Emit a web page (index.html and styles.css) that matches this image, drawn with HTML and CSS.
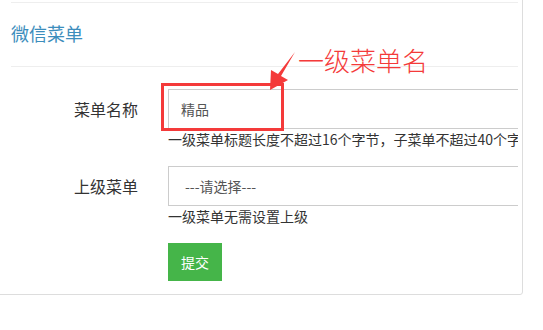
FILE: index.html
```html
<!DOCTYPE html>
<html lang="zh-CN">
<head>
    <meta charset="UTF-8">
    <meta name="viewport" content="width=device-width, initial-scale=1.0">
    <title>微信菜单</title>
    <link rel="stylesheet" href="styles.css">
</head>
<body>
    <div class="panel">
        <div class="panel-prev"></div>
        <h3 class="panel-title">微信菜单</h3>
        <form class="menu-form">
            <div class="form-row">
                <label class="form-label" for="name">菜单名称</label>
                <div class="form-field">
                    <input class="form-input" id="name" type="text" value="精品">
                    <p class="help">一级菜单标题长度不超过16个字节，子菜单不超过40个字节</p>
                </div>
            </div>
            <div class="form-row">
                <label class="form-label" for="parent">上级菜单</label>
                <div class="form-field">
                    <select class="form-input form-select" id="parent">
                        <option>---请选择---</option>
                    </select>
                    <p class="help">一级菜单无需设置上级</p>
                </div>
            </div>
            <div class="form-row form-actions">
                <span></span>
                <div class="form-field">
                    <button type="button" class="btn-submit">提交</button>
                </div>
            </div>
        </form>
    </div>

    <!-- 标注 -->
    <div class="mark-box"></div>
    <svg class="mark-arrow" width="543" height="330" viewBox="0 0 543 330">
        <polygon points="295,52 281,76 288,80 270,90 271,70 278,74" fill="#f43a3a"/>
    </svg>
    <div class="mark-text">一级菜单名</div>
</body>
</html>
```
FILE: styles.css
```css
body {
    margin: 0;
    font-family: "Noto Sans CJK SC", sans-serif;
    background-color: #fff;
    color: #333;
}
.panel {
    box-sizing: border-box;
    width: 543px;
    margin: -10px 0 0 -20px;
    border: 1px solid #ddd;
    border-radius: 3px;
    padding: 0 4px 13px 30px;
}
.panel-prev {
    height: 11px;
    border-bottom: 1px solid #eee;
}
.panel-title {
    margin: 0;
    padding: 18px 0 21px;
    font-size: 18px;
    line-height: 24px;
    font-weight: normal;
    color: #3c8dbc;
    border-bottom: 1px solid #eee;
}
.menu-form {
    padding-top: 22px;
}
.form-row {
    display: grid;
    grid-template-columns: 127px 1fr;
    column-gap: 30px;
    margin-bottom: 17px;
}
.form-row:last-child {
    margin-bottom: 0;
}
.form-label {
    text-align: right;
    font-size: 16px;
    line-height: 40px;
    color: #333;
}
.form-field {
    overflow: hidden;
}
.form-input {
    display: block;
    box-sizing: border-box;
    width: 400px;
    height: 40px;
    margin: 0;
    border: 1px solid #ccc;
    border-radius: 0;
    padding: 0 12px;
    font-family: inherit;
    font-size: 14px;
    color: #555;
    background-color: #fff;
    outline: none;
}
.form-select {
    appearance: none;
    -webkit-appearance: none;
    padding-left: 16px;
}
.help {
    margin: 0;
    font-size: 14px;
    line-height: 20px;
    white-space: nowrap;
    color: #333;
}
.btn-submit {
    width: 54px;
    height: 38px;
    padding: 0;
    border: none;
    background-color: #45b549;
    color: #fff;
    font-family: inherit;
    font-size: 14px;
    cursor: pointer;
}
.mark-box {
    position: absolute;
    left: 161px;
    top: 83px;
    width: 123px;
    height: 48px;
    box-sizing: border-box;
    border: 3px solid #f43a3a;
}
.mark-arrow {
    position: absolute;
    left: 0;
    top: 0;
    pointer-events: none;
}
.mark-text {
    position: absolute;
    left: 298px;
    top: 46px;
    font-size: 26px;
    font-weight: 300;
    line-height: 28px;
    color: #f43a3a;
}
```
